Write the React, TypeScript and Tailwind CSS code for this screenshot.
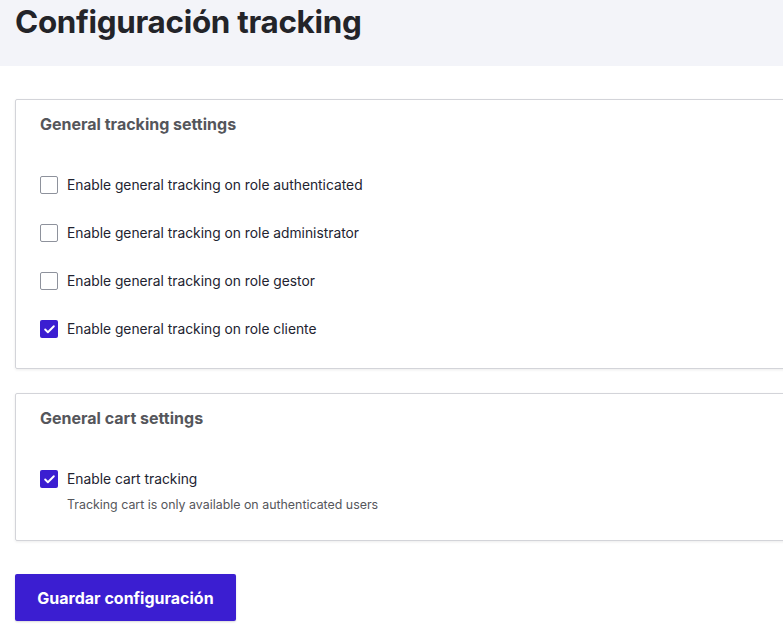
import { Check } from 'lucide-react';

interface CheckRowProps {
  label: string;
  checked?: boolean;
}

function CheckRow({ label, checked }: CheckRowProps) {
  return (
    <label className="flex h-6 items-center gap-[9px]">
      {checked ? (
        <span className="flex h-[18px] w-[18px] items-center justify-center rounded-[2px] bg-[#3b1ed1]">
          <Check className="h-[13px] w-[13px] text-white" strokeWidth={3.5} />
        </span>
      ) : (
        <span className="h-[18px] w-[18px] rounded-[2px] border border-[#8e929c] bg-white" />
      )}
      <span className="text-[13.8px] text-[#222330]">{label}</span>
    </label>
  );
}

const roles = [
  { name: 'authenticated', checked: false },
  { name: 'administrator', checked: false },
  { name: 'gestor', checked: false },
  { name: 'cliente', checked: true },
];

export default function App() {
  return (
    <div className="min-h-screen overflow-hidden bg-white font-['Inter',sans-serif] text-[#222330]">
      <div className="h-[66px] bg-[#f3f4f9] px-[15px]">
        <h1 className="text-[31.4px] font-bold leading-[45px] tracking-[-0.3px] text-[#232429]">Configuración tracking</h1>
      </div>

      <div className="px-[15px] pt-[33px]">
        {/* tracking por rol */}
        <div className="w-[900px] rounded-[2px] border border-[#d3d4d9] pb-[27px] pl-[24px] pt-[13px] shadow-[0_1px_3px_rgba(0,0,0,0.08)]">
          <h2 className="text-[16px] font-bold leading-[22px] text-[#55565b]">General tracking settings</h2>
          <div className="mt-[38px] flex flex-col gap-6">
            {roles.map((r) => (
              <CheckRow key={r.name} label={`Enable general tracking on role ${r.name}`} checked={r.checked} />
            ))}
          </div>
        </div>

        {/* carrito */}
        <div className="mt-6 w-[900px] rounded-[2px] border border-[#d3d4d9] pb-[27px] pl-[24px] pt-[13px] shadow-[0_1px_3px_rgba(0,0,0,0.08)]">
          <h2 className="text-[16px] font-bold leading-[22px] text-[#55565b]">General cart settings</h2>
          <div className="mt-[38px]">
            <CheckRow label="Enable cart tracking" checked />
          </div>
          <p className="ml-[27px] mt-[6px] text-[12.4px] leading-4 text-[#55565b]">
            Tracking cart is only available on authenticated users
          </p>
        </div>

        <button className="mt-[33px] h-[47px] w-[221px] rounded-[2px] bg-[#3b1ed1] text-[16px] font-bold text-white shadow-[0_1px_2px_rgba(0,0,0,0.15)]">
          Guardar configuración
        </button>
      </div>
    </div>
  );
}
